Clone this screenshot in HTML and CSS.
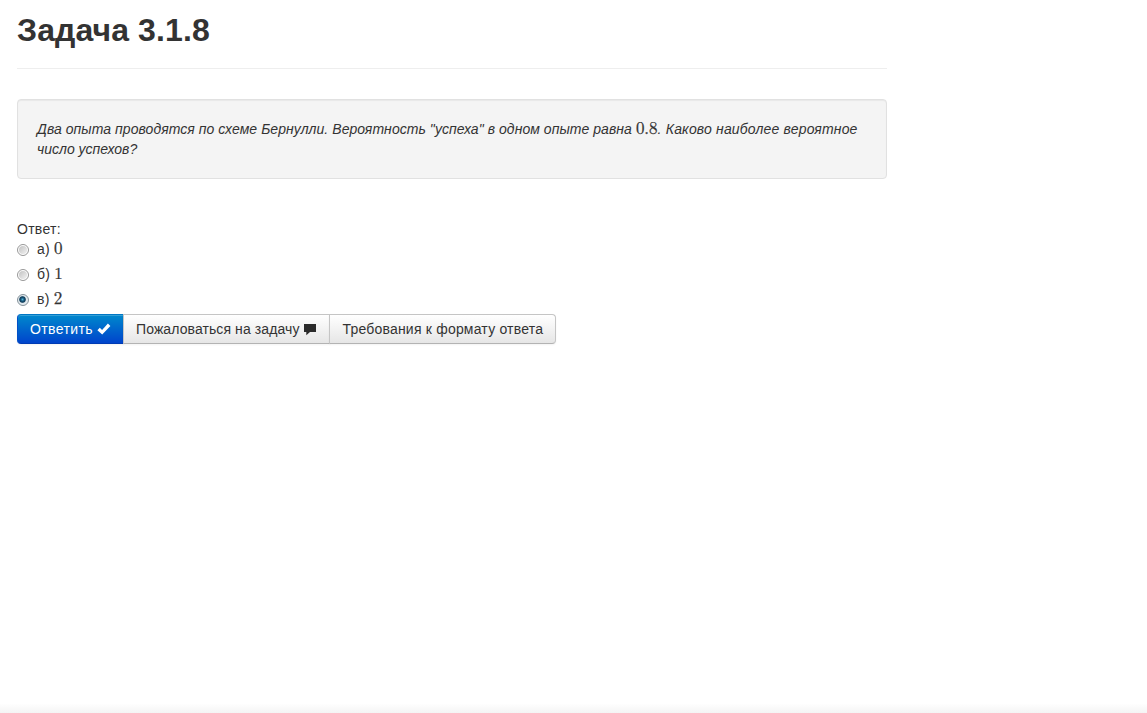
FILE: index.html
```html
<!DOCTYPE html>
<html lang="ru">
<head>
<meta charset="utf-8">
<title>Задача 3.1.8</title>
<link rel="stylesheet" href="styles.css">
</head>
<body>
<main class="page">
  <header class="page-header"><h1 class="title">Задача 3.1.8</h1></header>
  <section class="well"><span class="line line-first">Два опыта проводятся по схеме Бернулли. Вероятность "успеха" в одном опыте равна <span class="math">0.8</span><span class="question">. Каково наиболее вероятное</span></span> <span class="line line-last">число успехов?</span></section>
  <form class="answer">
    <div class="answer-label">Ответ:</div>
    <label class="option"><input class="radio" type="radio" name="answer"><span>а) <span class="math">0</span></span></label>
    <label class="option"><input class="radio" type="radio" name="answer"><span>б) <span class="math">1</span></span></label>
    <label class="option"><input class="radio" type="radio" name="answer" checked><span>в) <span class="math">2</span></span></label>
    <div class="btn-group">
      <button class="btn btn-primary" type="button"><span class="btn-text">Ответить</span><svg class="icon" width="14" height="14" viewBox="0 0 14 14"><path d="M.4 8.2 2.8 5.8 5.1 8 10.9 1.6 13.4 4 5.2 12.6Z" fill="#fff"/></svg></button>
      <button class="btn btn-report" type="button"><span class="btn-text">Пожаловаться на задачу</span><svg class="icon" width="14" height="14" viewBox="0 0 14 14"><path d="M1 2H13V10H7L3.3 13.2V10H1Z" fill="#2b2b2b"/></svg></button>
      <button class="btn btn-format" type="button"><span class="btn-text">Требования к формату ответа</span></button>
    </div>
  </form>
</main>
<div class="bottom-shade"></div>
</body>
</html>
```
FILE: styles.css
```css
* { box-sizing: border-box; }
body {
  margin: 0;
  height: 713px;
  overflow: hidden;
  display: flex;
  flex-direction: column;
  justify-content: space-between;
  background: #fff;
  color: #333;
  font: 14px/20px "Liberation Sans", Arial, sans-serif;
}
.page { width: 870px; margin-left: 17px; }
.page-header {
  height: 69px;
  padding-top: 10px;
  border-bottom: 1px solid #eee;
}
.title { margin: 0; font-size: 32px; line-height: 40px; letter-spacing: .1px; }
.well {
  height: 80px;
  margin: 30px 0 40px;
  padding: 19px;
  border: 1px solid #e1e1e1;
  border-radius: 4px;
  background: #f4f4f4;
  box-shadow: inset 0 1px 1px rgba(0, 0, 0, .05);
  font-style: italic;
}
.line { display: block; white-space: nowrap; }
.line-first { letter-spacing: .055px; }
.question { letter-spacing: .17px; }
.math {
  font: normal 17px/1 "Latin Modern Math", "Liberation Serif", serif;
  letter-spacing: 0;
  -webkit-text-stroke: .25px #333;
}
.answer-label { height: 20px; letter-spacing: .28px; }
.option { display: flex; height: 25px; line-height: 20px; letter-spacing: .25px; }
.option > span { white-space: nowrap; }
.radio {
  appearance: none;
  flex: none;
  width: 12px;
  height: 12px;
  margin: 5px 8px 0 0;
  border: 1px solid #979797;
  border-radius: 50%;
  background: linear-gradient(135deg, #c2c2c2, #f2f2f2) content-box #f4f4f4;
  padding: 1px;
}
.radio:checked {
  border-color: #85929a;
  background: radial-gradient(circle at 45% 45%, #55b4d8 0, #155276 1.8px, #123f5c 2.8px, #e3eaee 3.8px);
}
.btn-group { display: flex; }
.btn {
  display: flex;
  align-items: center;
  gap: 4px;
  height: 30px;
  margin: 0 0 0 -1px;
  padding: 0 12px;
  border: 1px solid #c5c5c5;
  border-bottom-color: #b3b3b3;
  background: linear-gradient(#fff, #e6e6e6);
  box-shadow: inset 0 1px 0 rgba(255, 255, 255, .2), 0 1px 2px rgba(0, 0, 0, .05);
  color: #333;
  font: inherit;
  white-space: nowrap;
}
.btn-primary {
  margin-left: 0;
  border-color: #0077c4 #0050c8 #003bb3;
  border-radius: 4px 0 0 4px;
  background: linear-gradient(#0088cc, #0044cc);
  color: #fff;
  letter-spacing: .4px;
}
.btn-report { letter-spacing: .09px; }
.btn-format { letter-spacing: .2px; }
.btn:last-child { border-radius: 0 4px 4px 0; }
.icon { flex: none; }
.bottom-shade { height: 9px; background: linear-gradient(#fefefe, #f4f4f4); }
```
